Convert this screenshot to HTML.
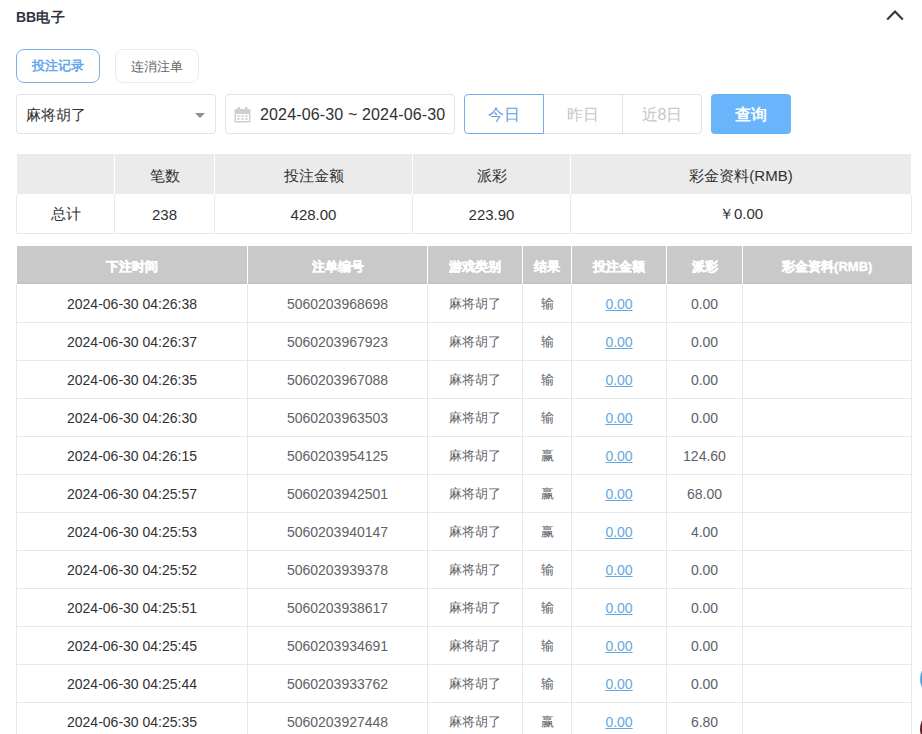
<!DOCTYPE html>
<html><head><meta charset="utf-8">
<style>
*{box-sizing:border-box;margin:0;padding:0}
html,body{width:922px;height:734px;overflow:hidden;background:#fff}
body{font-family:"Liberation Sans",sans-serif;font-size:14px;color:#303133;position:relative}
.abs{position:absolute}
.title{left:16px;top:6px;font-weight:bold;font-size:14px;line-height:22px;color:#2f3542}
.chev{left:886px;top:9px;width:18px;height:12px}
.tab{top:49px;height:34px;border-radius:8px;font-size:13px;line-height:32px;text-align:center}
.tab1{left:16px;width:84px;border:1px solid #7ab0e6;color:#64a8ee;font-weight:bold}
.tab2{left:115px;width:84px;border:1px solid #ebebeb;color:#666;padding-top:1px}
.inp{top:94px;height:40px;border:1px solid #e2e2e2;border-radius:4px;line-height:38px}
.sel{left:16px;width:200px;padding-left:9px;padding-top:1px;font-size:15px;color:#303133}
.tri{left:195px;top:113px;width:0;height:0;border-left:5px solid transparent;border-right:5px solid transparent;border-top:5px solid #8c8c8c}
.date{left:225px;width:230px;padding-left:34px;padding-top:1px;font-size:16px;color:#303133;letter-spacing:0.15px}
.grp{top:94px;height:40px;border:1px solid #e2e2e2;line-height:38px;padding-top:1px;text-align:center;font-size:16px;color:#c6c6c6}
.g1{left:464px;width:80px;border:1px solid #74aeea;color:#62a1e0;border-radius:4px 0 0 4px;z-index:2}
.g2{left:543px;width:80px}
.g3{left:622px;width:80px;border-radius:0 4px 4px 0}
.q{left:711px;top:94px;width:80px;height:40px;border-radius:4px;background:#69b5fc;color:#fff;font-weight:bold;text-align:center;line-height:40px;padding-top:1px;font-size:16px}
table{border-collapse:collapse;table-layout:fixed}
.sum{position:absolute;left:16px;top:154px;width:895px}
.sum td{height:39px;text-align:center;font-size:15px;color:#303133;border:1px solid #e8e8e8;padding-top:2px}
.sum tr.h td{height:40px;background:#ebebeb;border-color:#fff;border-top:none;padding-top:5px}
.main{position:absolute;left:16px;top:246px;width:895px}
.main th{height:38px;padding-top:3px;background:#c9c9c9;color:#fff;font-weight:bold;font-size:13px;-webkit-text-stroke:0.4px #fff;border-left:1px solid #fff;border-right:1px solid #fff;border-bottom:none;box-shadow:inset 0 -2px 0 #c4c4c4}
.main th:first-child{border-left:none}
.main th:last-child{border-right:none}
.main td{height:38px;text-align:center;font-size:14px;color:#606266;border:1px solid #e8e8e8;padding-top:2px}
.main td.c{font-size:13px}
.main tr:nth-child(2) td{border-top:none}
.main td.d{color:#303133}
.main td a{color:#66a8e2;text-decoration:underline}
</style></head><body>
<div class="abs title">BB<span style="letter-spacing:0.8px">电子</span></div>
<svg class="abs chev" viewBox="0 0 18 12"><path d="M1.2 10.6 L9 2.6 L16.8 10.6" fill="none" stroke="#2f3542" stroke-width="2.1"/></svg>

<div class="abs tab tab1">投注记录</div>
<div class="abs tab tab2">连消注单</div>

<div class="abs inp sel">麻将胡了</div>
<div class="abs tri"></div>
<div class="abs inp date">2024-06-30 ~ 2024-06-30</div>
<svg class="abs" style="left:234px;top:106px" width="17" height="17" viewBox="0 0 17 17"><g fill="#cfcfcf"><rect x="0.5" y="3" width="16" height="13.5" rx="1.2"/><rect x="3.5" y="1" width="2.5" height="4" rx="1"/><rect x="11" y="1" width="2.5" height="4" rx="1"/><rect x="6.5" y="3.5" width="4" height="2"/></g><rect x="2" y="8" width="13" height="7" fill="#fff"/><g fill="#d2d2d2"><rect x="3.5" y="9" width="2" height="2"/><rect x="7.5" y="9" width="2" height="2"/><rect x="11.5" y="9" width="2" height="2"/><rect x="3.5" y="12" width="2" height="2"/><rect x="7.5" y="12" width="2" height="2"/><rect x="11.5" y="12" width="2" height="2"/></g></svg>

<div class="abs grp g2">昨日</div>
<div class="abs grp g3">近8日</div>
<div class="abs grp g1">今日</div>
<div class="abs q">查询</div>

<table class="sum">
<colgroup><col style="width:98px"><col style="width:100px"><col style="width:198px"><col style="width:158px"><col style="width:341px"></colgroup>
<tr class="h"><td></td><td>笔数</td><td>投注金额</td><td>派彩</td><td>彩金资料(RMB)</td></tr>
<tr><td>总计</td><td>238</td><td>428.00</td><td>223.90</td><td>￥0.00</td></tr>
</table>

<table class="main">
<colgroup><col style="width:231px"><col style="width:180px"><col style="width:95px"><col style="width:49px"><col style="width:95px"><col style="width:76px"><col style="width:169px"></colgroup>
<tr><th>下注时间</th><th>注单编号</th><th>游戏类别</th><th>结果</th><th>投注金额</th><th>派彩</th><th>彩金资料(RMB)</th></tr>
<tr><td class="d">2024-06-30 04:26:38</td><td>5060203968698</td><td class="c">麻将胡了</td><td class="c">输</td><td><a>0.00</a></td><td>0.00</td><td></td></tr>
<tr><td class="d">2024-06-30 04:26:37</td><td>5060203967923</td><td class="c">麻将胡了</td><td class="c">输</td><td><a>0.00</a></td><td>0.00</td><td></td></tr>
<tr><td class="d">2024-06-30 04:26:35</td><td>5060203967088</td><td class="c">麻将胡了</td><td class="c">输</td><td><a>0.00</a></td><td>0.00</td><td></td></tr>
<tr><td class="d">2024-06-30 04:26:30</td><td>5060203963503</td><td class="c">麻将胡了</td><td class="c">输</td><td><a>0.00</a></td><td>0.00</td><td></td></tr>
<tr><td class="d">2024-06-30 04:26:15</td><td>5060203954125</td><td class="c">麻将胡了</td><td class="c">赢</td><td><a>0.00</a></td><td>124.60</td><td></td></tr>
<tr><td class="d">2024-06-30 04:25:57</td><td>5060203942501</td><td class="c">麻将胡了</td><td class="c">赢</td><td><a>0.00</a></td><td>68.00</td><td></td></tr>
<tr><td class="d">2024-06-30 04:25:53</td><td>5060203940147</td><td class="c">麻将胡了</td><td class="c">赢</td><td><a>0.00</a></td><td>4.00</td><td></td></tr>
<tr><td class="d">2024-06-30 04:25:52</td><td>5060203939378</td><td class="c">麻将胡了</td><td class="c">输</td><td><a>0.00</a></td><td>0.00</td><td></td></tr>
<tr><td class="d">2024-06-30 04:25:51</td><td>5060203938617</td><td class="c">麻将胡了</td><td class="c">输</td><td><a>0.00</a></td><td>0.00</td><td></td></tr>
<tr><td class="d">2024-06-30 04:25:45</td><td>5060203934691</td><td class="c">麻将胡了</td><td class="c">输</td><td><a>0.00</a></td><td>0.00</td><td></td></tr>
<tr><td class="d">2024-06-30 04:25:44</td><td>5060203933762</td><td class="c">麻将胡了</td><td class="c">输</td><td><a>0.00</a></td><td>0.00</td><td></td></tr>
<tr><td class="d">2024-06-30 04:25:35</td><td>5060203927448</td><td class="c">麻将胡了</td><td class="c">赢</td><td><a>0.00</a></td><td>6.80</td><td></td></tr>
</table>
<div class="abs" style="left:920px;top:660px;width:38px;height:38px;border-radius:50%;background:#4ea6ea"></div>
<div class="abs" style="left:920px;top:710px;width:38px;height:38px;border-radius:50%;background:#6a1d1f"></div>
</body></html>
